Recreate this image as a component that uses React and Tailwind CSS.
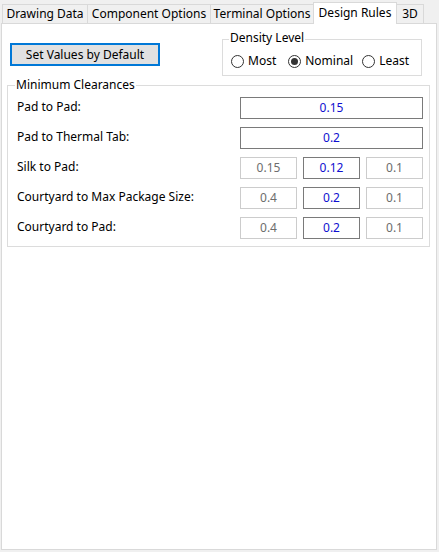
import React from "react";

const font = { fontFamily: '"Noto Sans", "Open Sans", sans-serif' };

const tabs = [
  { label: "Drawing Data", w: "w-[86px]" },
  { label: "Component Options", w: "w-[124px]" },
  { label: "Terminal Options", w: "w-[104px]" },
  { label: "Design Rules", w: "w-[84px]", active: true },
  { label: "3D", w: "w-[28px]" },
];

const rows = [
  { label: "Pad to Pad:", single: "0.15" },
  { label: "Pad to Thermal Tab:", single: "0.2" },
  { label: "Silk to Pad:", values: ["0.15", "0.12", "0.1"] },
  { label: "Courtyard to Max Package Size:", values: ["0.4", "0.2", "0.1"] },
  { label: "Courtyard to Pad:", values: ["0.4", "0.2", "0.1"] },
];

function Radio({ label, checked }) {
  return (
    <label className="flex items-center gap-[4px]">
      <span className="w-[13px] h-[13px] rounded-full border border-[#333333] bg-white flex items-center justify-center">
        {checked && <span className="w-[7px] h-[7px] rounded-full bg-[#333333]" />}
      </span>
      <span>{label}</span>
    </label>
  );
}

function Box({ value, enabled, wide }) {
  return (
    <div
      className={`h-[22px] flex items-center justify-center border ${wide ? "w-[183px]" : "w-[57px]"} ${
        enabled ? "border-[#7a7a7a] text-[#1010d0]" : "border-[#cccccc] text-[#6d6d6d]"
      }`}
    >
      {value}
    </div>
  );
}

export default function App() {
  return (
    <div className="w-[439px] h-[552px] bg-[#f0f0f0] text-[12px] text-black leading-none" style={font}>
      {/* Tabs */}
      <div className="h-[23px] flex items-end pl-[2px]">
        {tabs.map((t) =>
          t.active ? (
            <div
              key={t.label}
              className={`${t.w} -ml-px relative z-10 h-[22px] -mb-px bg-white border border-b-0 border-[#d9d9d9] flex items-center justify-center pb-[2px]`}
            >
              {t.label}
            </div>
          ) : (
            <div
              key={t.label}
              className={`${t.w} -ml-px first:ml-0 h-[19px] bg-[#f0f0f0] border border-b-0 border-[#d9d9d9] flex items-center justify-center`}
            >
              {t.label}
            </div>
          )
        )}
      </div>

      {/* Tab page */}
      <div className="ml-[1px] w-[436px] h-[527px] bg-white border border-[#d9d9d9]">
        <div className="pt-[15px] px-[5px]">
          <div className="flex items-start h-[46px]">
            <button className="ml-[3px] mt-[4px] w-[150px] h-[23px] bg-[#e1e1e1] border-2 border-[#0078d7] flex items-center justify-center">
              Set Values by Default
            </button>
            <div className="ml-[62px] w-[200px] h-[37px] relative border border-[#dcdcdc] flex items-center pl-[8px] pt-[7px]">
              <span className="absolute left-[6px] -top-[8px] bg-white px-[1px]">Density Level</span>
              <div className="flex items-center">
                <Radio label="Most" />
                <div className="ml-[12px]">
                  <Radio label="Nominal" checked />
                </div>
                <div className="ml-[9px]">
                  <Radio label="Least" />
                </div>
              </div>
            </div>
          </div>

          {/* Minimum Clearances */}
          <div className="w-[423px] h-[162px] relative border border-[#dcdcdc] pt-[11px] pl-[9px] pr-[6px] flex flex-col gap-[8px]">
            <span className="absolute left-[7px] -top-[7px] bg-white px-[1px]">Minimum Clearances</span>
            {rows.map((r) => (
              <div key={r.label} className="h-[22px] flex items-center justify-between">
                <span className="-mt-[2px]">{r.label}</span>
                {r.single ? (
                  <Box value={r.single} enabled wide />
                ) : (
                  <div className="flex gap-[6px]">
                    {r.values.map((v, i) => (
                      <Box key={i} value={v} enabled={i === 1} />
                    ))}
                  </div>
                )}
              </div>
            ))}
          </div>
        </div>
      </div>
    </div>
  );
}
